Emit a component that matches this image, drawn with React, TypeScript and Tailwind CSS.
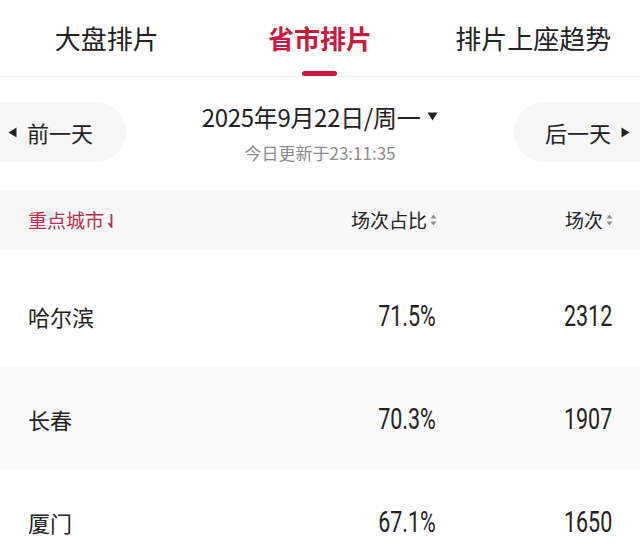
const rows = [
  { city: "哈尔滨", ratio: "71.5%", count: "2312", shaded: false },
  { city: "长春", ratio: "70.3%", count: "1907", shaded: true },
  { city: "厦门", ratio: "67.1%", count: "1650", shaded: false },
];

const tabs = [
  { label: "大盘排片", active: false },
  { label: "省市排片", active: true },
  { label: "排片上座趋势", active: false },
];

function SortIcon() {
  return (
    <svg width="9" height="14" viewBox="0 0 9 14" className="ml-[2px]">
      <path d="M4.5 1.5 L7.5 5.5 L1.5 5.5 Z" fill="#8f8f8f" />
      <path d="M4.5 12.5 L7.5 8.5 L1.5 8.5 Z" fill="#8f8f8f" />
    </svg>
  );
}

function Num({ children }: { children: string }) {
  return (
    <span className="inline-block origin-right scale-x-[0.74] font-['Roboto',sans-serif] text-[29px] leading-[34px] text-[#222]">
      {children}
    </span>
  );
}

export default function App() {
  return (
    <div className="w-[640px] h-[558px] overflow-hidden bg-white font-['Noto_Sans_CJK_SC',sans-serif] text-[#222]">
      {/* tabs */}
      <div className="grid grid-cols-3 h-[77px] border-b border-[#f1f1f1]">
        {tabs.map((t) => (
          <div key={t.label} className="flex flex-col items-center">
            <span
              className={
                t.active
                  ? "pt-[21px] text-[26px] leading-[34px] font-bold text-[#c8193f]"
                  : "pt-[21px] text-[26px] leading-[34px] text-[#222]"
              }
            >
              {t.label}
            </span>
            {t.active && <div className="mt-[16px] h-[5px] w-[35px] rounded-full bg-[#c8193f]" />}
          </div>
        ))}
      </div>

      {/* date row */}
      <div className="mt-[25px] flex items-center justify-between h-[60px]">
        <div className="flex h-[60px] w-[126px] items-center rounded-r-full bg-[#f6f6f6] pl-[8px]">
          <svg width="9" height="11" viewBox="0 0 9 11">
            <path d="M0.5 5.5 L8.5 0.5 L8.5 10.5 Z" fill="#222" />
          </svg>
          <span className="ml-[10px] text-[22px] leading-[28px]">前一天</span>
        </div>

        <div className="flex flex-col items-center pt-[1px]">
          <div className="flex items-center">
            <span className="text-[24px] leading-[30px] tracking-[-0.3px]">2025年9月22日/周一</span>
            <svg width="11" height="9" viewBox="0 0 11 9" className="ml-[7px]">
              <path d="M0.5 0.5 L10.5 0.5 L5.5 8.5 Z" fill="#222" />
            </svg>
          </div>
          <span className="mt-[10px] text-[17px] leading-[22px] text-[#8a8a8a]">今日更新于23:11:35</span>
        </div>

        <div className="flex h-[60px] w-[126px] items-center justify-end rounded-l-full bg-[#f6f6f6] pr-[10px]">
          <span className="mr-[10px] text-[22px] leading-[28px]">后一天</span>
          <svg width="9" height="11" viewBox="0 0 9 11">
            <path d="M8.5 5.5 L0.5 0.5 L0.5 10.5 Z" fill="#222" />
          </svg>
        </div>
      </div>

      {/* table header */}
      <div className="mt-[28px] grid h-[60px] grid-cols-[1fr_176px_176px] items-center bg-[#f7f7f7] pl-[28px] pr-[26px] text-[19px] leading-[26px]">
        <div className="flex items-center text-[#bf2a4d]">
          重点城市
          <svg width="7" height="15" viewBox="0 0 7 15" className="ml-[3px]">
            <path d="M4.5 1 L4.5 14 L1.5 10" stroke="#bf2a4d" strokeWidth="1.8" fill="none" />
          </svg>
        </div>
        <div className="flex items-center justify-end">
          场次占比
          <SortIcon />
        </div>
        <div className="flex items-center justify-end">
          场次
          <SortIcon />
        </div>
      </div>

      {/* rows */}
      <div className="mt-[14px]">
        {rows.map((r) => (
          <div
            key={r.city}
            className={
              r.shaded
                ? "grid h-[103px] grid-cols-[1fr_176px_176px] items-center bg-[#fafafa] pl-[28px] pr-[28px]"
                : "grid h-[103px] grid-cols-[1fr_176px_176px] items-center bg-white pl-[28px] pr-[28px]"
            }
          >
            <span className="text-[22px] leading-[30px]">{r.city}</span>
            <span className="text-right">
              <Num>{r.ratio}</Num>
            </span>
            <span className="text-right">
              <Num>{r.count}</Num>
            </span>
          </div>
        ))}
      </div>
    </div>
  );
}
